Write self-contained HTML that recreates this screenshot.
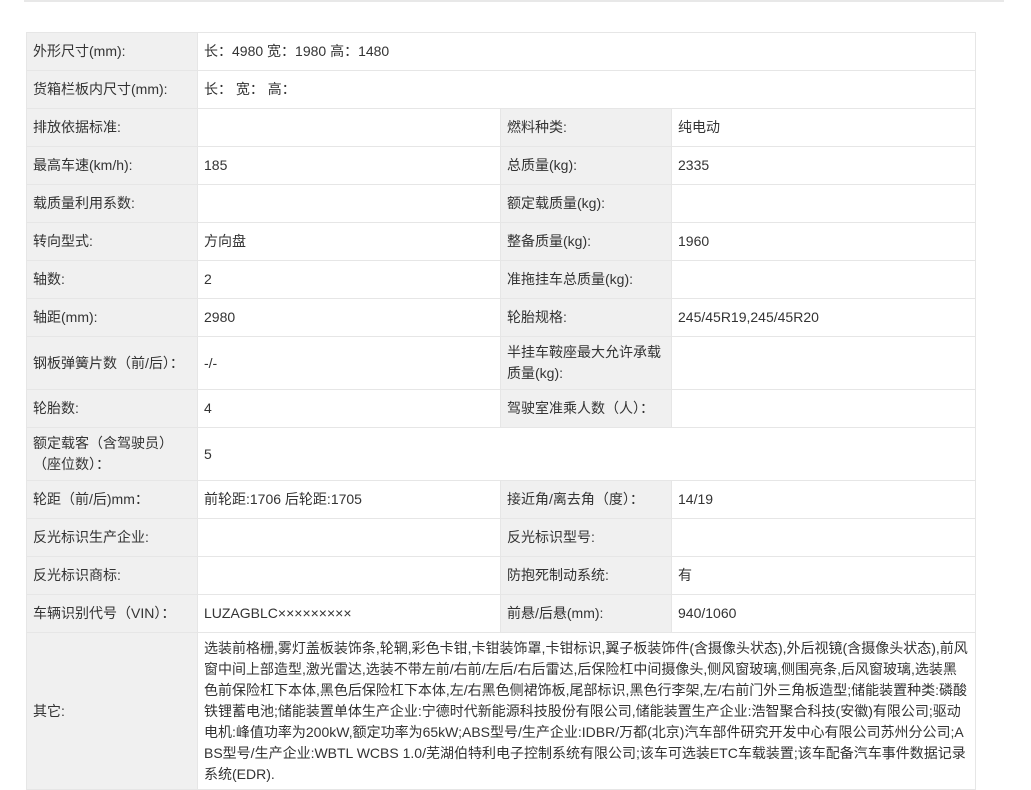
<!DOCTYPE html>
<html><head><meta charset="utf-8"><style>
body{margin:0;background:#fff;font-family:"Liberation Sans","Noto Sans CJK SC",sans-serif;font-size:14px;color:#333;}
.top{position:absolute;left:24px;top:0;width:980px;height:2px;background:#e8e8e8;}
table{position:absolute;left:26px;top:32px;border-collapse:collapse;width:949px;table-layout:fixed;}
td{border:1px solid #e6e6e6;padding:0 6px;height:37px;line-height:21px;vertical-align:middle;word-break:break-all;}
td.l{background:#f0f0f0;}
.tall td{height:52px;}
</style></head><body>
<div class="top"></div>
<table>
<colgroup><col style="width:171px"><col style="width:303px"><col style="width:171px"><col style="width:304px"></colgroup>
<tr><td class="l">外形尺寸(mm):</td><td colspan="3">长：4980 宽：1980 高：1480</td></tr>
<tr><td class="l">货箱栏板内尺寸(mm):</td><td colspan="3">长： 宽： 高：</td></tr>
<tr><td class="l">排放依据标准:</td><td></td><td class="l">燃料种类:</td><td>纯电动</td></tr>
<tr><td class="l">最高车速(km/h):</td><td>185</td><td class="l">总质量(kg):</td><td>2335</td></tr>
<tr><td class="l">载质量利用系数:</td><td></td><td class="l">额定载质量(kg):</td><td></td></tr>
<tr><td class="l">转向型式:</td><td>方向盘</td><td class="l">整备质量(kg):</td><td>1960</td></tr>
<tr><td class="l">轴数:</td><td>2</td><td class="l">准拖挂车总质量(kg):</td><td></td></tr>
<tr><td class="l">轴距(mm):</td><td>2980</td><td class="l">轮胎规格:</td><td>245/45R19,245/45R20</td></tr>
<tr class="tall"><td class="l">钢板弹簧片数（前/后）：</td><td>-/-</td><td class="l">半挂车鞍座最大允许承载质量(kg):</td><td></td></tr>
<tr><td class="l">轮胎数:</td><td>4</td><td class="l">驾驶室准乘人数（人）：</td><td></td></tr>
<tr class="tall"><td class="l">额定载客（含驾驶员）（座位数）：</td><td colspan="3">5</td></tr>
<tr><td class="l">轮距（前/后)mm：</td><td>前轮距:1706 后轮距:1705</td><td class="l">接近角/离去角（度）：</td><td>14/19</td></tr>
<tr><td class="l">反光标识生产企业:</td><td></td><td class="l">反光标识型号:</td><td></td></tr>
<tr><td class="l">反光标识商标:</td><td></td><td class="l">防抱死制动系统:</td><td>有</td></tr>
<tr><td class="l">车辆识别代号（VIN）：</td><td>LUZAGBLC×××××××××</td><td class="l">前悬/后悬(mm):</td><td>940/1060</td></tr>
<tr><td class="l">其它:</td><td colspan="3" style="padding:5px 6px 4px 6px;">选装前格栅,雾灯盖板装饰条,轮辋,彩色卡钳,卡钳装饰罩,卡钳标识,翼子板装饰件(含摄像头状态),外后视镜(含摄像头状态),前风窗中间上部造型,激光雷达,选装不带左前/右前/左后/右后雷达,后保险杠中间摄像头,侧风窗玻璃,侧围亮条,后风窗玻璃,选装黑色前保险杠下本体,黑色后保险杠下本体,左/右黑色侧裙饰板,尾部标识,黑色行李架,左/右前门外三角板造型;储能装置种类:磷酸铁锂蓄电池;储能装置单体生产企业:宁德时代新能源科技股份有限公司,储能装置生产企业:浩智聚合科技(安徽)有限公司;驱动电机:峰值功率为200kW,额定功率为65kW;ABS型号/生产企业:IDBR/万都(北京)汽车部件研究开发中心有限公司苏州分公司;ABS型号/生产企业:WBTL WCBS 1.0/芜湖伯特利电子控制系统有限公司;该车可选装ETC车载装置;该车配备汽车事件数据记录系统(EDR).</td></tr>
</table>
</body></html>
